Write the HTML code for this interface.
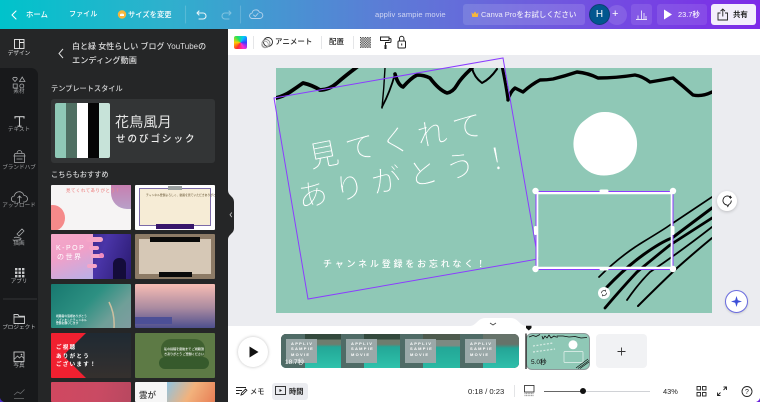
<!DOCTYPE html>
<html lang="ja"><head><meta charset="utf-8"><title>Canva</title>
<style>
*{box-sizing:border-box;margin:0;padding:0}
html,body{width:760px;height:402px;overflow:hidden;background:#fff}
body{position:relative;font-family:"Liberation Sans","Noto Sans CJK JP",sans-serif}
.a{position:absolute}
.t{position:absolute;white-space:nowrap;line-height:1;font-weight:500}
.w{color:#fff}
.r{position:absolute;left:0;width:38px;text-align:center;font-size:5.6px;color:#b9bbbd;line-height:1;white-space:nowrap}
.th{position:absolute;overflow:hidden;border-radius:1px}
.c1{left:51px;width:80px}.c2{left:135px;width:80px}
.card{position:absolute;top:5px;width:31px;height:24px;background:#9aa8a8;color:#fff;font-size:4px;line-height:5.4px;letter-spacing:1.3px;padding:2px 0 0 5px;font-weight:700}
.seg{position:absolute;top:0;height:34px;width:60px;overflow:hidden}
svg{position:absolute;overflow:visible}
</style></head><body>

<!-- top bar -->
<div class="a" style="left:0;top:0;width:760px;height:29px;background:linear-gradient(90deg,#00c3cb 0%,#2fb0cd 22%,#5b7dd6 50%,#6f5ade 72%,#7d2ae8 100%)"></div>
<svg style="left:0;top:0" width="760" height="29" fill="none" stroke="#fff" stroke-width="1.1" stroke-linecap="round" stroke-linejoin="round">
<path d="M16 11l-4 4 4 4"/>
<circle cx="122" cy="14.5" r="4.2" fill="#f6b73c" stroke="none"/><path d="M120 13.5l1 1 1-1.5 1 1.5 1-1v2.500h-4z" fill="#fff" stroke="none"/>
<path d="M199 11l-2 2 2 2M197 13h6a3 3 0 0 1 0 6h-4" stroke="#e8f4f8"/>
<path d="M229 11l2 2-2 2M231 13h-6a3 3 0 0 0 0 6h4" stroke="#fff" opacity=".35"/>
<path d="M185.500 6v17M240.500 6v17" stroke="#fff" opacity=".18"/>
<path d="M253 18.500h-.5a2.700 2.700 0 0 1-.4-5.400 3.800 3.800 0 0 1 7.300-.8 3 3 0 0 1 .6 6.200zM253.500 15l1.800 1.500 2.700-3" stroke="#cfe0f2" stroke-width=".9" opacity=".8"/>
</svg>
<span class="t w" style="left:26px;top:11px;font-size:7.400px">ホーム</span>
<span class="t w" style="left:69px;top:11px;font-size:7.100px">ファイル</span>
<span class="t w" style="left:128px;top:11px;font-size:7.300px">サイズを変更</span>
<span class="t" style="left:375px;top:11px;font-size:7.600px;color:#cfd5f3;letter-spacing:.1px">appliv sampie movie</span>
<div class="a" style="left:463px;top:4px;width:122px;height:21px;border-radius:3px;background:rgba(255,255,255,.13)"></div>
<svg style="left:471px;top:11px" width="8" height="7"><path d="M.5 1.200l1.700 1.800 1.800-2.500L5.800 3l1.700-1.800-.7 4.800H1.200z" fill="#f6b73c"/></svg>
<span class="t" style="left:481px;top:11px;font-size:7.500px;color:#eceaf9">Canva Proをお試しください</span>
<div class="a" style="left:607px;top:5px;width:20px;height:20px;border-radius:50%;background:rgba(255,255,255,.12)"></div>
<div class="a" style="left:589px;top:4px;width:21px;height:21px;border-radius:50%;background:#02578f;border:1px solid #0d3f74;color:#fff;font-size:10px;line-height:19px;text-align:center">H</div>
<span class="t w" style="left:612px;top:9px;font-size:11px;font-weight:400">+</span>
<div class="a" style="left:631px;top:4px;width:21px;height:21px;border-radius:3px;background:rgba(255,255,255,.1)"></div>
<svg style="left:636px;top:9px" width="12" height="12" fill="none" stroke="#e9e4fb" stroke-width=".9"><path d="M0 10.500h11M2 10V6.500M5.500 10V1.500M8 10V4M10 10V7"/></svg>
<div class="a" style="left:657px;top:4px;width:50px;height:21px;border-radius:3px;background:rgba(255,255,255,.1)"></div>
<svg style="left:663px;top:9px" width="10" height="11"><path d="M1 .5l8 5-8 5z" fill="#fff"/></svg>
<span class="t w" style="left:678px;top:11px;font-size:7.400px">23.7秒</span>
<div class="a" style="left:711px;top:4px;width:45px;height:21px;border-radius:3px;background:#f3eefc"></div>
<svg style="left:717px;top:8px" width="12" height="13" fill="none" stroke="#222" stroke-width=".9"><path d="M3.500 5H1v7h9.500V5H8M5.800 8.500V1M3.500 3.200L5.800 1 8 3.200"/></svg>
<span class="t" style="left:733px;top:11px;font-size:7.400px;color:#222;font-weight:700">共有</span>

<!-- canvas area -->
<div class="a" style="left:228px;top:55px;width:532px;height:275px;background:#ebecf0"></div>
<!-- toolbar -->
<div class="a" style="left:228px;top:29px;width:532px;height:26px;background:#fff"></div>
<div class="a" style="left:234px;top:36px;width:13px;height:13px;border-radius:2px;background:conic-gradient(from 210deg,#ff2d2d,#ffd000,#23e35a,#00c6ff,#3b3bff,#ff2bd6,#ff2d2d)"></div>
<svg style="left:228px;top:29px" width="190" height="26" fill="none" stroke="#222" stroke-width=".9">
<path d="M25.500 7v13M93.500 7v13M125.500 7v13" stroke="#e3e4e6"/>
<circle cx="40" cy="13" r="4.500"/><circle cx="38" cy="14.500" r="4" stroke="#888"/><circle cx="37" cy="15.500" r="3.300" stroke="#aaa"/>
<path d="M161 9.500h1a1 1 0 0 1 1 1v2a1 1 0 0 1-1 1h-4.500v2.500" stroke-width="1"/><rect x="156.500" y="16" width="2" height="4" fill="#222" stroke="none"/><path d="M152.500 8h8.500v3.500h-8.500z" fill="#fff" stroke-width="1"/>
<rect x="170" y="12" width="7.500" height="7" rx="1" stroke-width="1"/><path d="M171.500 12V9.500a2.200 2.200 0 0 1 4.400 0V12M173.700 14.500v2" stroke-width="1"/>
</svg>
<svg style="left:360px;top:37px" width="11" height="11"><defs><pattern id="ck" width="2.400" height="2.400" patternUnits="userSpaceOnUse"><rect width="1.200" height="1.200" fill="#333"/><rect x="1.200" y="1.200" width="1.200" height="1.200" fill="#333"/></pattern></defs><rect width="11" height="11" fill="url(#ck)"/></svg>
<span class="t" style="left:275px;top:38px;font-size:7.500px;color:#222">アニメート</span>
<span class="t" style="left:329px;top:38px;font-size:7.500px;color:#222">配置</span>

<!-- design canvas -->
<div class="a" style="left:276px;top:68px;width:436px;height:245px;background:#8fc8b6;overflow:hidden"></div>
<svg style="left:0;top:0" width="760" height="402" fill="none" stroke-linecap="round" stroke-linejoin="round">
<defs><clipPath id="cv"><rect x="276" y="68" width="436" height="245"/></clipPath></defs>
<g clip-path="url(#cv)" stroke="#000">
<path d="M276 98Q284 96 290 92T303 83Q312 85 320 90 329 90 337 83T357 67" stroke-width="3.800"/>
<path d="M382 108Q384 88 385 68" stroke-width="1.400"/><path d="M382 107Q390 92 395 74" stroke-width="1.800"/>
<path d="M395 74Q398 85 403 87 411 78 417 75 424 75 430 78 439 90 447 93 453 92 457 85T472 68" stroke-width="3.600"/>
<path d="M472 68Q474 77 482 83 490 79 497 69" stroke-width="2"/>
<path d="M502 66Q506 85 508 100" stroke-width="3"/><path d="M508 100Q510 92 515 88 519 90 523 92 532 84 540 80 547 80 553 79 565 76 577 72 588 73 598 78 616 78 635 75 642 76 650 82 662 80 673 78 683 86 693 95 702 97 712 92" stroke-width="3.400"/>
<path d="M599 277Q620 256 643 242T670 225L712 197" stroke-width="1.700"/>
<path d="M607 287Q625 268 643 255T672 238L712 208" stroke-width="3"/>
<path d="M605 308Q622 288 637 272 655 257 670 245L712 218" stroke-width="2.800"/>
<path d="M627 300Q638 284 650 272 680 252 712 227" stroke-width="1.800"/>
<path d="M638 306Q658 286 677 268 695 252 712 238" stroke-width="2"/>
</g>
<path d="M604 112c9-.5 19 3.500 25 11 6 7 8.500 15 8 23-.5 9-4 16-11 22-6 5-14 7.500-22 7.500-9 0-17-3.500-23-11-5-6-8-14-7.500-22 .5-9 4-17 11-22 6-5 12-8.500 19.500-8.500z" fill="#fff"/>
<path d="M274 98L503 58 538 259 308 299Z" stroke="#8b3dff" stroke-width="1" stroke-linejoin="miter"/>
<rect x="537" y="193" width="135" height="75" stroke="#fff" stroke-width="2.600"/>
<rect x="536" y="191.500" width="137" height="78" stroke="#8b3dff" stroke-width="1"/>
<g fill="#fff" stroke="none">
<circle cx="535.500" cy="191" r="3.200"/><circle cx="673" cy="191" r="3.200"/><circle cx="535.500" cy="269" r="3.200"/><circle cx="673" cy="269" r="3.200"/>
<rect x="599.500" y="189.500" width="9" height="3" rx="1.500"/><rect x="599.500" y="267.500" width="9" height="3" rx="1.500"/>
<rect x="534" y="226" width="3" height="9" rx="1.500"/><rect x="671.500" y="226" width="3" height="9" rx="1.500"/>
<circle cx="604" cy="293" r="6"/>
</g>
<path d="M601.500 293a2.500 2.500 0 0 1 4-2M606.500 293a2.500 2.500 0 0 1-4 2M605.500 290v1.500M602.500 296v-1.500" stroke="#333" stroke-width=".7"/>
<text x="0" y="0" transform="translate(311 168) rotate(-11)" font-family="'WenQuanYi Zen Hei','Noto Sans CJK JP',sans-serif" font-size="30" font-weight="300" fill="#fff" stroke="#8fc8b6" stroke-width=".45" letter-spacing="7">見てくれて</text>
<text x="0" y="0" transform="translate(300 208) rotate(-11)" font-family="'WenQuanYi Zen Hei','Noto Sans CJK JP',sans-serif" font-size="30" font-weight="300" fill="#fff" stroke="#8fc8b6" stroke-width=".45" letter-spacing="7.500">ありがとう！</text>
<text x="323" y="267" font-family="'Noto Sans CJK JP',sans-serif" font-size="9" font-weight="500" fill="#fff" stroke="none" letter-spacing="2.800">チャンネル登録をお忘れなく！</text>
</svg>

<!-- side buttons -->
<div class="a" style="left:717px;top:191px;width:20px;height:20px;border-radius:50%;background:#fff;box-shadow:0 1px 3px rgba(0,0,0,.2)"></div>
<svg style="left:721px;top:195px" width="13" height="13" fill="none" stroke="#222" stroke-width=".9"><path d="M9.500 2.200A4.500 4.500 0 1 0 6 10l.800 1.500 1-2a4.500 4.500 0 0 0 2.500-4M9.500 .8v3M8 2.300h3"/></svg>
<div class="a" style="left:725px;top:290px;width:23px;height:23px;border-radius:50%;background:#fff;border:1.300px solid #6a6ce0;box-shadow:0 1px 2px rgba(0,0,0,.15)"></div>
<svg style="left:730px;top:295px" width="13" height="13"><path d="M6.500 1l1.300 4.200L12 6.500 7.800 7.800 6.500 12 5.200 7.800 1 6.500l4.200-1.300z" fill="#3d4fd8"/></svg>

<!-- left side -->
<div class="a" style="left:0;top:29px;width:228px;height:373px;background:#252627"></div>
<div class="a" style="left:0;top:68px;width:38px;height:334px;background:#18191b;border-top-right-radius:7px"></div>
<svg style="left:228px;top:190px" width="7" height="50"><path d="M0 0c0 6 6 6 6 12v26c0 6-6 6-6 12z" fill="#252627"/><path d="M3.800 22.500l-1.800 2.300 1.800 2.300" stroke="#ccc" stroke-width=".8" fill="none"/></svg>

<svg style="left:0;top:29px" width="60" height="373" fill="none" stroke="#d8d9da" stroke-width=".9">
<rect x="14.500" y="10.500" width="9.500" height="9" stroke="#eee"/><path d="M19.500 10.500v9M19.500 13.500h4.500" stroke="#eee"/>
<path d="M15 52.500l-2-2.200a1.300 1.300 0 0 1 2-1.600 1.300 1.300 0 0 1 2 1.600zM19.500 52.500l2.700-4.500 2.700 4.500zM13.200 55h4v4h-4zM21.800 55a2 2 0 1 1 0 4 2 2 0 0 1 0-4z" stroke="#a9abad" stroke-width=".8"/>
<path d="M15 89.500v-1.800h9v1.800M19.500 87.700v9.500M17.500 97.200h4" stroke="#c8c9ca" stroke-width="1.100"/>
<path d="M14.500 127v6.500h10V127zM14 127h11l-1-2.500h-9zM17 124.500c0-4 5-4 5 0M16.500 130h6" stroke="#a9abad" stroke-width=".8"/>
<path d="M16 173h-1.500a3 3 0 0 1-.3-6 5 5 0 0 1 9.800-.5 3 3 0 0 1 .5 6.500H23M19.500 174v-7M17.500 169l2-2 2 2" stroke="#a9abad" stroke-width=".8"/>
<path d="M17 205l5-5 2 2-5 5zM14 209c2-2 4 0 6 0s1 2-2 2-5 1-5-.5" stroke="#a9abad" stroke-width=".8"/>
<path d="M14 285.500v9h10.500v-7.300h-5.500l-1-1.700zM14 288h10.500" stroke="#c9cacb" stroke-width=".9"/>
<rect x="14" y="323" width="10" height="9.500" stroke="#c9cacb"/><path d="M14.500 330l3-3 2 2 2-2 2.500 2.500" stroke="#c9cacb" stroke-width=".7"/><circle cx="21.500" cy="325.500" r=".8" fill="#c9cacb" stroke="none"/>
<path d="M14 366l3.500-3 3 1.500 4-4M14 369.500h10" stroke="#6a6c6e" stroke-width=".8"/>
<path d="M3 270h34" stroke="#333537" stroke-width="1"/>
</svg>
<svg style="left:15px;top:268px" width="10" height="10" fill="#c9cacb"><rect width="2.400" height="2.400"/><rect x="3.500" width="2.400" height="2.400"/><rect x="7" width="2.400" height="2.400"/><rect y="3.500" width="2.400" height="2.400"/><rect x="3.500" y="3.500" width="2.400" height="2.400"/><rect x="7" y="3.500" width="2.400" height="2.400"/><rect y="7" width="2.400" height="2.400"/><rect x="3.500" y="7" width="2.400" height="2.400"/><rect x="7" y="7" width="2.400" height="2.400"/></svg>
<span class="r" style="top:52px;color:#e8e8e9">デザイン</span>
<span class="r" style="top:90px;color:#9a9c9e">素材</span>
<span class="r" style="top:128px;color:#a2a4a6">テキスト</span>
<span class="r" style="top:166px;color:#a2a4a6">ブランドハブ</span>
<span class="r" style="top:204px;color:#a2a4a6">アップロード</span>
<span class="r" style="top:242px;color:#a2a4a6">描画</span>
<span class="r" style="top:280px;color:#b9bbbd">アプリ</span>
<span class="r" style="top:326px;color:#b9bbbd">プロジェクト</span>
<span class="r" style="top:364px;color:#b9bbbd">写真</span>

<svg style="left:57px;top:47px" width="10" height="13" fill="none" stroke="#ddd" stroke-width="1"><path d="M6 2l-4 4.500L6 11"/></svg>
<span class="t" style="left:72px;top:43px;font-size:8px;color:#dcdcdd">白と緑 女性らしい ブログ YouTubeの</span>
<span class="t" style="left:72px;top:57px;font-size:8.200px;color:#dcdcdd">エンディング動画</span>
<span class="t" style="left:51px;top:85px;font-size:7.200px;color:#d2d3d4">テンプレートスタイル</span>
<div class="a" style="left:51px;top:99px;width:164px;height:64px;background:#333536;border-radius:3px"></div>
<div class="a" style="left:55px;top:103px;width:55px;height:55px;border-radius:2px;overflow:hidden;background:linear-gradient(90deg,#8fc8b6 0 20%,#4f6f62 20% 40%,#fff 40% 60%,#050505 60% 80%,#c7e3d9 80% 100%)"></div>
<span class="t" style="left:115px;top:115px;font-size:14px;font-weight:300;color:#e6e6e6;letter-spacing:.2px;font-family:'WenQuanYi Zen Hei',sans-serif">花鳥風月</span>
<span class="t" style="left:116px;top:135px;font-size:9.500px;color:#efefef;letter-spacing:2px;font-weight:500">せのびゴシック</span>
<span class="t" style="left:51px;top:171px;font-size:7.200px;color:#d2d3d4">こちらもおすすめ</span>

<!-- thumbs row 1 -->
<div class="th c1" style="top:185px;height:45px;background:#f6f4f4">
<div class="a" style="left:-10px;top:20px;width:24px;height:26px;border-radius:50%;background:#f58a8a"></div>
<div class="a" style="right:0;top:0;width:20px;height:24px;border-radius:0 0 0 16px;background:linear-gradient(#c77fb0,#b8a0c8)"></div>
<span class="t" style="left:15px;top:4px;font-size:4.400px;color:#ef8a8a;letter-spacing:.6px">見てくれてありがとう！</span>
</div>
<div class="th c2" style="top:185px;height:45px;background:#fff">
<div class="a" style="left:4px;top:3px;width:72px;height:38px;background:#f6ecd6;border:1.200px solid #7b6aa8"></div>
<div class="a" style="left:21px;top:39px;width:38px;height:5px;background:#37166b"></div>
<div class="a" style="left:33px;top:1px;width:14px;height:4px;background:#9aa0a0"></div>
<span class="t" style="left:11px;top:9px;font-size:2.800px;color:#7a6a4a">チャンネル登録よろしく、動画を見ていただきありがとう！</span>
</div>
<!-- row 2 -->
<div class="th c1" style="top:234px;height:45px;background:linear-gradient(110deg,#1e1250,#4a35a8 60%,#2a1a70)">
<div class="a" style="left:0;top:0;width:42px;height:45px;background:linear-gradient(160deg,#f5a8c8,#f0a0c8 45%,#b8b0e8)"></div>
<div class="a" style="left:35px;top:3px;width:17px;height:5px;border-radius:3px;background:#f5a5c8"></div>
<div class="a" style="left:38px;top:12px;width:10px;height:4px;border-radius:2px;background:#f5a5c8"></div>
<div class="a" style="left:40px;top:20px;width:13px;height:4px;border-radius:2px;background:#f5a5c8"></div>
<div class="a" style="left:36px;top:30px;width:10px;height:4px;border-radius:2px;background:#f5a5c8"></div>
<div class="a" style="left:62px;top:24px;width:13px;height:21px;border-radius:6px 6px 0 0;background:#140c3a"></div>
<div class="a" style="left:48px;top:19px;width:5px;height:5px;border-radius:50%;background:#f08cc0"></div>
<span class="t w" style="left:5px;top:11px;font-size:7px;letter-spacing:1.500px;font-weight:400">K-POP</span>
<span class="t w" style="left:6px;top:20px;font-size:7px;letter-spacing:1.500px;font-weight:400">の世界</span>
</div>
<div class="th c2" style="top:234px;height:45px;background:#8d7b66">
<div class="a" style="left:4px;top:5px;width:72px;height:35px;background:#d6c8b6"></div>
<div class="a" style="left:15px;top:3px;width:50px;height:5px;background:#0a0a0a"></div>
<div class="a" style="left:24px;top:38px;width:33px;height:5px;background:#0a0a0a"></div>
</div>
<!-- row 3 -->
<div class="th c1" style="top:284px;height:44px;background:linear-gradient(135deg,#17786f,#2d9082 45%,#6f9f98 75%,#7f9ca0)">
<svg style="left:0;top:0" width="80" height="44" fill="none"><path d="M58 18q6 12 5 26" stroke="#cdbfa0" stroke-width="1.500"/></svg>
<span class="t w" style="left:5px;top:31px;font-size:2.800px;line-height:3.600px;white-space:normal;width:32px">視聴者の皆様ありがとう ございましたチャンネル 登録お願いします</span>
</div>
<div class="th c2" style="top:284px;height:44px;background:linear-gradient(#f8bdb4,#a98aa0 55%,#4e4f8e)">
<div class="a" style="left:0;top:33px;width:37px;height:7px;background:#4c4f96"></div>
</div>
<!-- row 4 -->
<div class="th c1" style="top:333px;height:45px;background:linear-gradient(#1f2a33,#35302e)">
<div class="a" style="left:0;top:0;width:35px;height:45px;background:#f02030;clip-path:polygon(0 0,100% 0,35% 50%,100% 100%,0 100%)"></div>
<span class="t w" style="left:5px;top:11px;font-size:5.500px;line-height:8.500px;letter-spacing:1.300px;font-weight:700">ご視聴<br>ありがとう<br>ございます！</span>
</div>
<div class="th c2" style="top:333px;height:45px;background:#5d7a45">
<div class="a" style="left:26px;top:6px;width:44px;height:22px;border-radius:10px;background:#3f6030"></div>
<div class="a" style="left:24px;top:24px;width:50px;height:12px;border-radius:6px;background:#365a2c"></div>
<span class="t w" style="left:29px;top:14px;font-size:3px;line-height:4.500px;white-space:normal;width:40px;text-align:center">私の投稿を最後まで ご視聴頂きありがとう ご登録ください</span>
</div>
<!-- row 5 -->
<div class="th c1" style="top:382px;height:20px;background:linear-gradient(100deg,#d14860,#c94a63 60%,#b84860)"></div>
<div class="th c2" style="top:382px;height:20px;background:#f6f6f6">
<div class="a" style="left:32px;top:0;width:48px;height:20px;background:linear-gradient(120deg,#8fc3e0,#f2b27c 50%,#e87e55)"></div>
<span class="t" style="left:4px;top:9px;font-size:8.500px;color:#333;font-weight:500">雲が</span>
</div>

<!-- bottom panel -->
<svg style="left:228px;top:316px" width="532" height="86"><path d="M0 10H242C248 10 250 2 257 2H283C290 2 292 10 298 10H532V86H0Z" fill="#fff"/><path d="M262 7l3 2 3-2" stroke="#444" stroke-width=".8" fill="none"/></svg>
<div class="a" style="left:238px;top:337px;width:30px;height:30px;border-radius:50%;background:#fff;box-shadow:0 0 3px rgba(0,0,0,.25)"></div>
<svg style="left:249px;top:346px" width="10" height="12"><path d="M.5 .5L9.500 6 .5 11.500z" fill="#111"/></svg>

<!-- timeline -->
<div class="a" style="left:281px;top:334px;width:238px;height:34px;border-radius:5px;overflow:hidden;background:#111">
<div class="seg" style="left:0"><div class="a" style="inset:0;background:linear-gradient(#33493d 0 16%,#6d7d6e 16% 30%,#23a797 38%,#2ec2ab 100%)"></div><div class="a" style="left:0;top:0;width:24px;height:34px;background:#4f6b66"></div><div class="card" style="left:5px">APPLIV<br>SAMPIE<br>MOVIE</div></div>
<div class="seg" style="left:60px"><div class="a" style="inset:0;background:linear-gradient(#33493d 0 16%,#6d7d6e 16% 30%,#23a797 38%,#2ec2ab 100%)"></div><div class="a" style="left:0;top:0;width:23px;height:34px;background:#4f6b66"></div><div class="card" style="left:5px">APPLIV<br>SAMPIE<br>MOVIE</div></div>
<div class="seg" style="left:119px"><div class="a" style="inset:0;background:linear-gradient(#4d5a4d 0 18%,#7c8a82 18% 34%,#23a797 40%,#2ab9a3 100%)"></div><div class="a" style="left:0;top:0;width:23px;height:34px;background:#4f6b66"></div><div class="card" style="left:5px">APPLIV<br>SAMPIE<br>MOVIE</div></div>
<div class="seg" style="left:179px"><div class="a" style="inset:0;background:linear-gradient(#66736a 0 30%,#24a596 42%,#2fbfab 100%)"></div><div class="a" style="left:0;top:0;width:23px;height:34px;background:#4f6b66"></div><div class="card" style="left:5px">APPLIV<br>SAMPIE<br>MOVIE</div></div>
<span class="t w" style="left:4px;top:26px;font-size:6.500px;font-weight:400">18.7秒</span>
</div>

<div class="a" style="left:526px;top:333px;width:64px;height:37px;border-radius:6px;background:#8fc8b6;border:1.500px solid #8d9a9a;overflow:hidden"></div>
<svg style="left:526px;top:326px" width="66" height="44" fill="none" stroke="#111" stroke-linejoin="round">
<path d="M0 7.500V43" stroke-width="1.300" stroke="#222"/>
<path d="M0 -.3h5.500v2.300L2.800 4.500 0 2z" fill="#111" stroke="none"/>
<path d="M3 11l4-1.500 3 1 4-2M16 10l1 3 2-3 2 2 2-3 2 3 3-2 2 1M31 12v-2h6l6 1 6-.5 6 1.500 6-.5" stroke-width=".8"/>
<circle cx="47" cy="18.800" r="4.500" fill="#fff" stroke="none"/>
<rect x="38" y="25.500" width="19" height="11" rx="1" stroke="#e8f2ef" stroke-width=".7"/>
<path d="M50 42l12-9M52 42.500l11-8M54 42.500l9-6.500" stroke-width=".7"/>
<path d="M7 20l20-3M7 26l22-3" stroke="#d7ebe4" stroke-width="1.200" stroke-dasharray="2 1.500"/>
</svg>
<span class="t" style="left:531px;top:360px;font-size:6.500px;color:#111;font-weight:500">5.0秒</span>
<div class="a" style="left:596px;top:334px;width:51px;height:34px;border-radius:4px;background:#f1f2f4"></div>
<svg style="left:617px;top:347px" width="9" height="9" stroke="#333" stroke-width=".9"><path d="M4.500 .5v8M.5 4.500h8"/></svg>

<!-- bottom row -->
<div class="a" style="left:272px;top:383px;width:36px;height:17px;border-radius:3px;background:#ebecf0"></div>
<svg style="left:235px;top:385px" width="13" height="12" fill="none" stroke="#222" stroke-width=".9"><path d="M1 2.500h10M1 5.500h6M1 8.500h3.500M6 10l.6-2 4-4 1.300 1.300-4 4z"/></svg>
<svg style="left:275px;top:386px" width="11" height="9" fill="none" stroke="#222" stroke-width=".9"><rect x=".5" y=".5" width="10" height="8"/><path d="M4.500 3l2.500 1.500L4.500 6z" fill="#222" stroke="none"/></svg>
<span class="t" style="left:250px;top:388px;font-size:7.200px;color:#222">メモ</span>
<span class="t" style="left:289px;top:388px;font-size:7.200px;color:#222;font-weight:700">時間</span>
<span class="t" style="left:468px;top:388px;font-size:7.700px;color:#222;font-weight:400">0:18 / 0:23</span>
<div class="a" style="left:514px;top:385px;width:1px;height:12px;background:#e3e4e6"></div>
<svg style="left:524px;top:385px" width="12" height="12" fill="none" stroke="#222" stroke-width=".8"><rect x=".5" y=".5" width="9.500" height="6.500"/><path d="M.5 8.500h9.500M.5 10.500h9.500" stroke="#999" stroke-dasharray="1 .6" stroke-width="1.200"/></svg>
<div class="a" style="left:544px;top:391px;width:106px;height:1px;background:#d0d2d6"></div>
<div class="a" style="left:544px;top:391px;width:39px;height:1px;background:#666"></div>
<div class="a" style="left:580px;top:388px;width:6px;height:6px;border-radius:50%;background:#111"></div>
<span class="t" style="left:663px;top:388px;font-size:7.400px;color:#222;font-weight:400">43%</span>
<svg style="left:696px;top:386px" width="60" height="13" fill="none" stroke="#222" stroke-width=".9">
<rect x="1" y=".5" width="3.500" height="3.500"/><rect x="6.500" y=".5" width="3.500" height="3.500"/><rect x="1" y="6.500" width="3.500" height="3.500"/><rect x="6.500" y="6.500" width="3.500" height="3.500"/>
<path d="M21.500 9.500l3-3M21.500 6.500v3h3M30.500 1l-3 3M27.500 1h3v3"/>
<circle cx="51" cy="5.500" r="5"/><text x="51" y="8" font-size="7" text-anchor="middle" fill="#222" stroke="none" font-family="Liberation Sans">?</text>
</svg>
<svg style="left:0;top:398px" width="4" height="4"><path d="M0 0Q1 3 4 4H0z" fill="#4b2bc8"/></svg>
<svg style="left:756px;top:398px" width="4" height="4"><path d="M4 0Q3 3 0 4H4z" fill="#6a22d8"/></svg>
</body></html>
